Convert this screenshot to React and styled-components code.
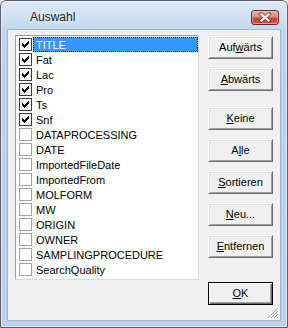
import React from 'react';
import styled, { createGlobalStyle } from 'styled-components';

const Global = createGlobalStyle`
  html, body { margin: 0; padding: 0; background: #ffffff; }
  body { width: 288px; height: 328px; overflow: hidden; }
  * { box-sizing: border-box; }
`;

const Window = styled.div`
  width: 288px;
  height: 328px;
  border: 1px solid #57606c;
  border-radius: 6px 6px 0 0;
  background: linear-gradient(#dde8f6 0px, #cddef2 20px, #c3d7ef 28px, #bfd4ed 29px, #bcd2ec 100%);
  box-shadow: inset 0 0 0 1px rgba(255, 255, 255, 0.55);
  display: flex;
  flex-direction: column;
  font-family: "Liberation Sans", Arial, sans-serif;
`;

const TitleBar = styled.div`
  height: 28px;
  flex: none;
  display: flex;
  align-items: flex-start;
  justify-content: space-between;
  padding: 0 8px 0 29px;
`;

const TitleText = styled.span`
  margin-top: 9px;
  font-size: 12px;
  line-height: 14px;
  color: #1b1b1b;
  text-shadow: 0 0 5px rgba(255, 255, 255, 0.95);
`;

const CloseButton = styled.div`
  margin-top: 9px;
  width: 28px;
  height: 15px;
  border: 1px solid #6e2a21;
  border-radius: 3px;
  background: linear-gradient(#e9aa9d 0%, #dc8f80 45%, #c2493a 55%, #c5503f 85%, #d77a66 100%);
  box-shadow: inset 0 0 0 1px rgba(255, 220, 210, 0.45);
  display: flex;
  align-items: center;
  justify-content: center;
`;

const Client = styled.div`
  flex: 1;
  margin: 0 6px 6px;
  border: 1px solid #9fb6d3;
  background: #f0f0f0;
  display: flex;
  align-items: flex-start;
  gap: 9px;
  padding: 5px 7px 0 7px;
  position: relative;
`;

const ListBox = styled.div`
  width: 184px;
  height: 245px;
  flex: none;
  background: #ffffff;
  border: 1px solid;
  border-color: #a0a0a0 #dadada #dadada #a0a0a0;
  padding-top: 1px;
  display: flex;
  flex-direction: column;
`;

const Row = styled.div`
  height: 15px;
  display: flex;
  align-items: center;
  padding-left: 3px;
`;

const Box = styled.span`
  width: 13px;
  height: 13px;
  flex: none;
  background: #ffffff;
  border: 1px solid ${p => (p.$checked ? '#3c3c3c' : '#a0a0a0')};
  display: flex;
  align-items: center;
  justify-content: center;
`;

const Label = styled.span`
  flex: 1;
  height: 15px;
  margin-left: 1px;
  padding: 0 0 0 2px;
  border: 1px dotted ${p => (p.$selected ? '#000000' : 'transparent')};
  background: ${p => (p.$selected ? '#3399ff' : 'transparent')};
  color: ${p => (p.$selected ? '#ffffff' : '#000000')};
  font-size: 11px;
  line-height: 14px;
  white-space: nowrap;
  overflow: hidden;
`;

const ButtonColumn = styled.div`
  display: flex;
  flex-direction: column;
  margin-top: 1px;
`;

const Btn = styled.div`
  width: 65px;
  height: 23px;
  margin-top: ${p => p.$mt || 0}px;
  background: #f0f0f0;
  color: #000000;
  font-size: 11px;
  line-height: 13px;
  display: flex;
  align-items: center;
  justify-content: center;
  border: 1px solid;
  border-color: ${p => (p.$default ? '#000000' : '#ffffff #696969 #696969 #ffffff')};
  box-shadow: ${p =>
    p.$default
      ? 'inset 1px 1px #ffffff, inset -1px -1px #696969, inset -2px -2px #a0a0a0'
      : 'inset 1px 1px #e3e3e3, inset -1px -1px #a0a0a0'};
  u { text-decoration: underline; text-underline-offset: 1px; }
`;

const Grip = styled.svg`
  position: absolute;
  right: 1px;
  bottom: 1px;
`;

const CheckMark = () => (
  <svg width="7" height="7" viewBox="0 0 7 7" shapeRendering="crispEdges">
    <path
      fill="#000"
      d="M6 0h1v1h-1z M5 1h2v1h-2z M0 2h1v1h-1z M4 2h3v1h-3z M0 3h2v1h-2z M3 3h3v1h-3z M0 4h5v1h-5z M1 5h3v1h-3z M2 6h1v1h-1z"
    />
  </svg>
);

const items = [
  ['TITLE', true],
  ['Fat', true],
  ['Lac', true],
  ['Pro', true],
  ['Ts', true],
  ['Snf', true],
  ['DATAPROCESSING', false],
  ['DATE', false],
  ['ImportedFileDate', false],
  ['ImportedFrom', false],
  ['MOLFORM', false],
  ['MW', false],
  ['ORIGIN', false],
  ['OWNER', false],
  ['SAMPLINGPROCEDURE', false],
  ['SearchQuality', false],
];

export default function App() {
  return (
    <>
      <Global />
      <Window>
        <TitleBar>
          <TitleText>Auswahl</TitleText>
          <CloseButton>
            <svg width="14" height="11" viewBox="0 0 14 11">
              <path d="M3 2 L11 9 M11 2 L3 9" stroke="#6a2a22" strokeWidth="4" strokeLinecap="square" opacity="0.55" />
              <path d="M3.5 2.5 L10.5 8.5 M10.5 2.5 L3.5 8.5" stroke="#ffffff" strokeWidth="2.2" strokeLinecap="square" />
            </svg>
          </CloseButton>
        </TitleBar>
        <Client>
          <ListBox>
            {items.map(([name, checked], i) => (
              <Row key={name}>
                <Box $checked={checked}>{checked && <CheckMark />}</Box>
                <Label $selected={i === 0}>{name}</Label>
              </Row>
            ))}
          </ListBox>
          <ButtonColumn>
            <Btn>Auf<u>w</u>ärts</Btn>
            <Btn $mt={9}><u>A</u>bwärts</Btn>
            <Btn $mt={16}><u>K</u>eine</Btn>
            <Btn $mt={9}>A<u>l</u>le</Btn>
            <Btn $mt={9}><u>S</u>ortieren</Btn>
            <Btn $mt={9}><u>N</u>eu...</Btn>
            <Btn $mt={9}><u>E</u>ntfernen</Btn>
            <Btn $mt={24} $default><u>O</u>K</Btn>
          </ButtonColumn>
          <Grip width="12" height="12" viewBox="0 0 12 12" shapeRendering="crispEdges">
            <path d="M11 1 L1 11 M11 4 L4 11 M11 7 L7 11 M11 10 L10 11" stroke="#a0a0a0" strokeWidth="1.2" />
            <path d="M12 2 L2 12 M12 5 L5 12 M12 8 L8 12" stroke="#ffffff" strokeWidth="1" />
          </Grip>
        </Client>
      </Window>
    </>
  );
}
